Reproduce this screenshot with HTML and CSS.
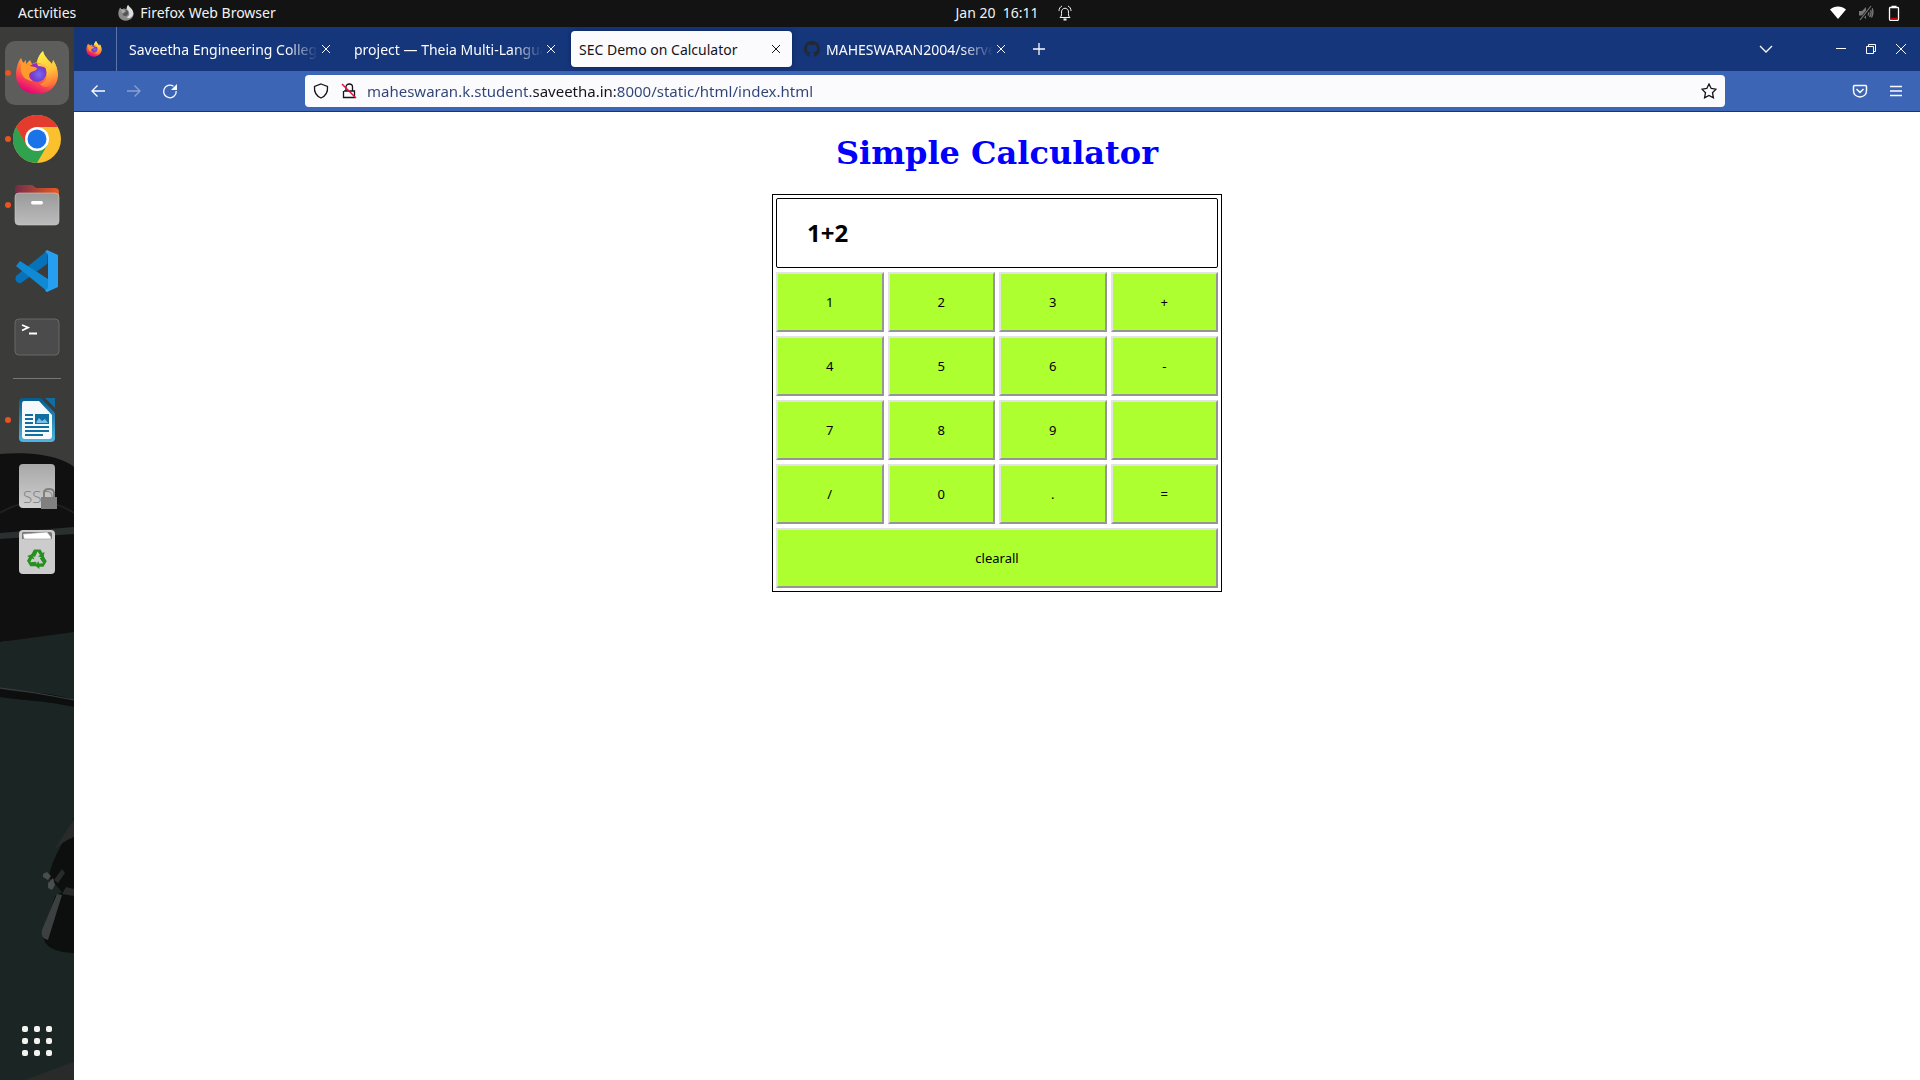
FILE: index.html
```html
<!DOCTYPE html>
<html lang="en">
<head>
<meta charset="utf-8">
<title>SEC Demo on Calculator</title>
<link rel="stylesheet" href="styles.css">
</head>
<body>
<header class="topbar">
  <div class="topbar-side">
    <button class="top-button">Activities</button>
    <button class="top-button app-menu">
      <svg class="icon" viewBox="0 0 42 44" aria-hidden="true"><path fill="#8b8b8b" d="M27 0C28 5 31 7 33 10C39 14 42 19 42 25C41 36 32 43 21 43C9 43 0 35 0 24C0 17 2 11 5 7L9 13C13 11 14 9 17 10L23 11C23 6 24 3 27 0Z"/><path fill="#dedede" d="M27 0C30 7 42 10 41 25C38 37 27 38 23 34C34 29 31 18 23 11C23 6 24 3 27 0Z"/><circle cx="19" cy="22" r="8" fill="#555"/><path fill="#aaa" d="M5 8C8 13 15 11 21 17C20 20 14 19 14 24C10 23 8 18 5 8Z"/></svg>
      Firefox Web Browser
    </button>
  </div>
  <button class="top-button clock">
    <span>Jan 20&nbsp; 16:11</span>
    <svg class="icon" viewBox="0 0 16 16" aria-hidden="true" fill="none" stroke="#f2f2f2"><path d="M3 12.500C5 11 4.500 9 4.500 7C4.500 2 11.500 2 11.500 7C11.500 9 11 11 13 12.500ZM2 6C2 3.500 3 2 5 1M14 6C14 3.500 13 2 11 1"/><path d="M6.500 14.500H9.500" stroke-width="2"/></svg>
  </button>
  <button class="top-button status" aria-label="System menu">
    <svg class="icon" viewBox="0 0 16 16"><path fill="#fff" d="M0 4.500C4.500 .5 11.500 .5 16 4.500L8 14Z"/></svg>
    <svg class="icon" viewBox="0 0 16 16" fill="none" stroke="#777"><path fill="#777" stroke="none" d="M1 6H4L8 2V14L4 10.500H1Z"/><path stroke-width="1.400" d="M10 5.500Q11.500 8 10 10.500M12 4Q14.500 8 11.500 12M14 3Q16 8 13.500 12.500"/><path stroke="#131313" stroke-width="3" d="M2 15L14 1"/><path stroke-width="1.200" d="M2 15L13 1"/></svg>
    <svg class="icon" viewBox="0 0 16 16" fill="none"><path stroke="#fff" stroke-width="1.300" d="M5 2.500H4Q3.500 2.500 3.500 3.500V14Q3.500 15.500 5 15.500H11Q12.500 15.500 12.500 14V3.500Q12.500 2.500 12 2.500H5M5.500 1.500H10.500"/><path stroke="#c00" stroke-width="1.500" d="M4.500 13.500H11.500"/></svg>
  </button>
</header>

<div class="desktop">
  <nav class="dock" aria-label="Dock">
    <svg class="wallpaper" viewBox="0 0 74 1053" preserveAspectRatio="none" aria-hidden="true">
      <path fill="#3b3b39" d="M0 0H74V1053H0Z"/>
      <path fill="#101010" d="M0 427C35 424 62 430 74 440V608L0 615Z"/>
      <path fill="none" stroke="#1e1f1f" stroke-width="2" d="M0 486Q38 463 74 486"/>
      <path fill="#2a2f2f" d="M0 506L74 500V507L0 512Z"/>
      <path fill="#1a2524" d="M0 615L74 605V1053H0Z"/>
      <path fill="#0d0e0e" d="M0 662C25 667 44 663 74 673V680C42 673 25 674 0 670Z"/>
      <path fill="none" stroke="#3d3e3e" d="M0 661Q34 665 74 673"/>
      <path fill="#0d0e0e" d="M74 790C66 814 52 830 49 850L62 865L55 869L43 908Q44 925 74 926Z"/>
      <path fill="#3d4040" d="M57 867L62 868L48 913Q40 911 42 903Z"/>
      <path fill="#4a4d4d" d="M43 847L47 845L51 849L48 853L43 850ZM48 856L53 851L55 858L52 863L48 861Z"/>
      <path fill="#292b2a" d="M24 1053L74 1035V1053ZM74 792L54 823Q63 814 74 810ZM66 860L74 862V869L62 867ZM62 842L65 846L58 856L54 853Z"/>
    </svg>
    <ul class="dock-list">
      <li><button class="dock-item focused running" aria-label="Firefox">
        <svg width="42" height="44" viewBox="0 0 42 44" aria-hidden="true">
          <defs>
            <linearGradient id="fire" x1=".8" y1="0" x2=".35" y2="1"><stop offset="0" stop-color="#ffe94a"/><stop offset=".35" stop-color="#ffad29"/><stop offset=".62" stop-color="#ff6740"/><stop offset="1" stop-color="#e30079"/></linearGradient>
            <linearGradient id="flame" x1=".4" y1="0" x2=".6" y2="1"><stop offset="0" stop-color="#fff24a"/><stop offset=".55" stop-color="#ffc33a"/><stop offset="1" stop-color="#ff6b3b"/></linearGradient>
            <radialGradient id="globe" cx=".6" cy=".6"><stop offset="0" stop-color="#7b68f2"/><stop offset=".7" stop-color="#7140d2"/><stop offset="1" stop-color="#9b2ab4"/></radialGradient>
          </defs>
          <g id="firefox">
            <path fill="url(#fire)" d="M27 0C28 5 31 7 33 10L36 13C37 12 37 10 37 9C40 14 42 18 42 25C41 36 32 43 21 43C9 43 0 35 0 24C0 17 2 11 5 7L7 12L10 9V13L14 9L16 13L21 11C22 6 24 3 27 0Z"/>
            <path fill="url(#flame)" d="M27 0C28 5 31 7 33 10L36 13L37 9C41 15 42 20 41 26C38 37 28 38 24 33C34 30 33 18 21 11C22 6 24 3 27 0Z"/>
            <circle cx="21" cy="21.500" r="9.500" fill="url(#globe)"/>
            <path fill="#ff9a2d" d="M5 8C7 13 8 12 12 14C15 16 18 15 21 17C21 20 16 20 14 22C12 25 14 28 17 30C10 30 5 25 5 18Z"/>
            <path fill="#ffc044" d="M21 12Q29 12 33 18Q26 15 22 15Z"/>
          </g>
        </svg></button></li>
      <li><button class="dock-item running" aria-label="Chrome">
        <svg width="48" height="48" viewBox="0 0 48 48" aria-hidden="true"><circle cx="24" cy="24" r="24" fill="#fbc02d"/><path fill="#e33b2e" d="M3.200 12A24 24 0 0 1 44.800 12H24L13.600 30Z"/><path fill="#30a14e" d="M3.200 12A24 24 0 0 0 24 48L34.400 30H13.600Z"/><path fill="#e33b2e" d="M3.200 12L13.600 30L24 12Z"/><circle cx="24" cy="24" r="12" fill="#fff"/><circle cx="24" cy="24" r="9.500" fill="#1a73e8"/></svg></button></li>
      <li><button class="dock-item running" aria-label="Files">
        <svg width="48" height="48" viewBox="0 0 48 48" aria-hidden="true"><defs><linearGradient id="folder"><stop stop-color="#742b4a"/><stop offset="1" stop-color="#ea5b20"/></linearGradient><linearGradient id="silver" x2="0" y2="1"><stop stop-color="#9a9a9a"/><stop offset="1" stop-color="#bcbcbc"/></linearGradient></defs><path fill="url(#folder)" d="M2 8Q2 4 6 4H19L23 7H42Q46 7 46 11V20H2Z"/><rect x="2" y="12" width="44" height="32" rx="4" fill="url(#silver)" stroke="#ccc" stroke-width=".6"/><rect x="18" y="20" width="12" height="3.500" rx="1.700" fill="#fff"/></svg></button></li>
      <li><button class="dock-item" aria-label="Visual Studio Code">
        <svg width="48" height="48" viewBox="0 0 48 48" aria-hidden="true"><path fill="#0872b9" d="M3 29L35 3L34 17L8 36Q6 37 3 34Q2 32 3 29Z"/><path fill="#118ad5" d="M3 19L7 14L35 32V45L3 19Z"/><path fill="#279ff0" d="M34 3L45 8V40L34 45Q33 45 32 43Q35 42 35 40V8Q34 5 32 5Z"/></svg></button></li>
      <li><button class="dock-item" aria-label="Terminal">
        <svg width="48" height="48" viewBox="0 0 48 48" aria-hidden="true" fill="none"><rect x="2" y="6" width="44" height="36" rx="4" fill="#4b4b4b" stroke="#696969"/><path stroke="#fff" stroke-width="1.800" d="M9 12L15 14.500L9 17.500M16 20.500H24"/></svg></button></li>
      <li class="dock-separator"></li>
      <li><button class="dock-item running" aria-label="LibreOffice Writer">
        <svg width="48" height="48" viewBox="0 0 48 48" aria-hidden="true"><defs><linearGradient id="writer" x2="0" y2="1"><stop stop-color="#075b8a"/><stop offset="1" stop-color="#4eb5e4"/></linearGradient></defs><path fill="url(#writer)" d="M10 2H28L42 17V42Q42 46 38 46H10Q6 46 6 42V6Q6 2 10 2Z"/><path fill="#f6f9fb" d="M11 5H26L39 19V40Q39 43 36 43H12Q9 43 9 40V8Q9 5 11 5Z"/><path fill="#126da1" d="M32 2H42V12Z"/><path stroke="#126da1" stroke-width="2" d="M12 19H20M12 23H20M12 27H20M12 31H36M12 35H36M12 39H30"/><path fill="#126da1" d="M22 18H36V28H22Z"/><path fill="#75c2e8" d="M23.500 26L26 22L29 25L32 23L35 27H23.500Z"/></svg></button></li>
      <li><button class="dock-item" aria-label="SSD drive">
        <svg width="48" height="48" viewBox="0 0 48 48" aria-hidden="true"><defs><linearGradient id="disk" x2="0" y2="1"><stop stop-color="#a8a8a8"/><stop offset="1" stop-color="#cfcfcf"/></linearGradient></defs><rect x="6" y="2" width="36" height="44" rx="4" fill="url(#disk)"/><text class="disk-label" x="10" y="41">SSD</text><path fill="none" stroke="#808080" stroke-width="2" d="M31 36V31Q31 27 36 27Q41 27 41 31V36"/><path fill="#808080" d="M28 35H44V47H28Z"/></svg></button></li>
      <li><button class="dock-item" aria-label="Trash">
        <svg width="48" height="48" viewBox="0 0 48 48" aria-hidden="true"><rect x="6" y="2" width="36" height="44" rx="4" fill="#ccc"/><path fill="#777" d="M9 5Q9 4 11 4H37Q39 4 39 6V11H9Z"/><path fill="#fff" stroke="#999" stroke-width=".6" d="M10 6L34 4L38 9V11H11Z"/><g fill="#26901f"><path id="arrow" d="M18 27L21 21.500H27.500L29.500 25L31.500 24L30.500 29.500L25 28.500L27 27L24.500 23.500L22 29Z"/><use href="#arrow" transform="rotate(120 24 31)"/><use href="#arrow" transform="rotate(240 24 31)"/></g></svg></button></li>
    </ul>
    <button class="dock-item" aria-label="Show Applications">
      <svg width="30" height="30" viewBox="0 0 30 30" fill="#f3f3ef" aria-hidden="true"><g id="dots"><rect width="6" height="6" rx="2"/><rect x="12" width="6" height="6" rx="2"/><rect x="24" width="6" height="6" rx="2"/></g><use href="#dots" y="12"/><use href="#dots" y="24"/></svg>
    </button>
  </nav>

  <div class="browser">
    <div class="tabbar">
      <button class="pinned-tab" aria-label="Firefox View"><svg class="icon" viewBox="0 0 42 44"><use href="#firefox"/></svg></button>
      <div class="tabs">
        <div class="tab"><button class="tab-title">Saveetha Engineering College</button><button class="tab-close" aria-label="Close tab"><svg class="icon" viewBox="0 0 16 16"><path d="M4 4L12 12M12 4L4 12"/></svg></button></div>
        <div class="tab"><button class="tab-title">project — Theia Multi-Language</button><button class="tab-close" aria-label="Close tab"><svg class="icon" viewBox="0 0 16 16"><path d="M4 4L12 12M12 4L4 12"/></svg></button></div>
        <div class="tab active"><button class="tab-title">SEC Demo on Calculator</button><button class="tab-close" aria-label="Close tab"><svg class="icon" viewBox="0 0 16 16"><path d="M4 4L12 12M12 4L4 12"/></svg></button></div>
        <div class="tab"><svg class="icon favicon" viewBox="0 0 16 16" aria-hidden="true"><path d="M8 0C3.580 0 0 3.580 0 8c0 3.540 2.290 6.530 5.470 7.590.4.070.55-.17.55-.38 0-.19-.01-.82-.01-1.490-2.010.37-2.530-.49-2.690-.94-.09-.23-.48-.94-.82-1.130-.28-.15-.68-.52-.01-.53.63-.01 1.080.58 1.230.82.72 1.210 1.870.87 2.330.66.07-.52.28-.87.51-1.070-1.780-.2-3.640-.89-3.640-3.950 0-.87.31-1.590.82-2.150-.08-.2-.36-1.020.08-2.120 0 0 .67-.21 2.200.82.64-.18 1.320-.27 2-.27s1.360.09 2 .27c1.530-1.040 2.200-.82 2.200-.82.44 1.100.16 1.920.08 2.120.51.56.82 1.270.82 2.150 0 3.070-1.870 3.750-3.650 3.950.29.25.54.73.54 1.480 0 1.070-.01 1.930-.01 2.200 0 .21.15.46.55.38A8.010 8.010 0 0 0 16 8c0-4.420-3.580-8-8-8Z"/></svg><button class="tab-title">MAHESWARAN2004/serverside</button><button class="tab-close" aria-label="Close tab"><svg class="icon" viewBox="0 0 16 16"><path d="M4 4L12 12M12 4L4 12"/></svg></button></div>
        <button class="tool" aria-label="New tab"><svg class="icon" viewBox="0 0 16 16"><path d="M2 8H14M8 2V14"/></svg></button>
      </div>
      <button class="tool list-tabs" aria-label="List all tabs"><svg class="icon" viewBox="0 0 16 16"><path d="M2 5L8 11L14 5"/></svg></button>
      <div class="window-controls">
        <button aria-label="Minimize"><svg class="icon" viewBox="0 0 16 16"><path d="M3 7.500H13"/></svg></button>
        <button aria-label="Restore"><svg class="icon" viewBox="0 0 16 16"><path d="M3.500 5.500H10.500V12.500H3.500ZM5.500 5V3.500H12.500V10.500H11"/></svg></button>
        <button aria-label="Close"><svg class="icon" viewBox="0 0 16 16"><path d="M3 3L13 13M13 3L3 13"/></svg></button>
      </div>
    </div>

    <div class="toolbar">
      <button class="tool" aria-label="Back"><svg class="icon" viewBox="0 0 16 16"><path d="M15 8H2M7.500 2.500L2 8L7.500 13.500"/></svg></button>
      <button class="tool" aria-label="Forward" disabled><svg class="icon" viewBox="0 0 16 16"><path d="M1 8H14M8.500 2.500L14 8L8.500 13.500"/></svg></button>
      <button class="tool" aria-label="Reload"><svg class="icon" viewBox="0 0 16 16"><path d="M14.200 8A6.300 6.300 0 1 1 11.500 3.300"/><path fill="#fbfbfe" stroke="none" d="M15 1V7H9Z"/></svg></button>
      <div class="urlbar">
        <button aria-label="Tracking protection"><svg class="icon" viewBox="0 0 16 16"><path d="M8 1L14.500 3.500C15 9 12.500 13 8 15C3.500 13 1 9 1.500 3.500Z"/></svg></button>
        <button aria-label="Connection not secure"><svg class="icon" viewBox="0 0 16 16"><path d="M3 8H13.500V14.500H2.500V8M5 8V4C5 0 11.500 0 11.500 4V8"/><path class="strike" d="M1 1L15 15"/></svg></button>
        <input class="address" type="text" aria-label="Address" value="maheswaran.k.student.saveetha.in:8000/static/html/index.html">
        <button aria-label="Bookmark this page"><svg class="icon" viewBox="0 0 16 16"><path d="M8 1L10.200 5.500L15 6.200L11.500 9.700L12.400 14.800L8 12.400L3.600 14.800L4.500 9.700L1 6.200L5.800 5.500Z"/></svg></button>
      </div>
      <button class="tool" aria-label="Save to Pocket"><svg class="icon" viewBox="0 0 16 16"><path stroke-width="1.500" d="M2.500 2.500H13.500Q14.500 2.500 14.500 3.500V7.500C14.500 16 1.500 16 1.500 7.500V3.500Q1.500 2.500 2.500 2.500ZM4.500 6L8 9.500L11.500 6"/></svg></button>
      <button class="tool" aria-label="Menu"><svg class="icon" viewBox="0 0 16 16"><path d="M2 3.500H14M2 8H14M2 12.500H14"/></svg></button>
    </div>

    <main class="page">
      <h1>Simple Calculator</h1>
      <form class="calculator">
        <input class="display" type="text" aria-label="Result" value="1+2">
        <button type="button">1</button><button type="button">2</button><button type="button">3</button><button type="button">+</button>
        <button type="button">4</button><button type="button">5</button><button type="button">6</button><button type="button">-</button>
        <button type="button">7</button><button type="button">8</button><button type="button">9</button><button type="button" aria-label="Multiply"></button>
        <button type="button">/</button><button type="button">0</button><button type="button">.</button><button type="button">=</button>
        <button type="button" class="wide">clearall</button>
      </form>
    </main>
  </div>
</div>
</body>
</html>
```
FILE: styles.css
```css
* { box-sizing: border-box; }

body {
  margin: 0;
  min-height: 100vh;
  display: flex;
  flex-direction: column;
  font: 14px/20px "Noto Sans", sans-serif;
}

button {
  margin: 0;
  padding: 0;
  border: 0;
  background: none;
  color: inherit;
  font: inherit;
}

svg { display: block; flex: none; }
.icon { width: 16px; height: 16px; }

/* System bar */
.topbar {
  display: grid;
  grid-template-columns: 1fr auto 1fr;
  align-items: center;
  height: 27px;
  padding: 0 18px 2px;
  background: #131313;
  color: #f2f2f2;
}
.topbar-side { display: flex; gap: 42px; }
.top-button { display: flex; align-items: center; }
.app-menu { gap: 6px; }
.clock { gap: 18px; padding-left: 108px; }
.status { gap: 12px; justify-self: end; }

.desktop { flex: 1; display: flex; }

/* Dock */
.dock {
  position: relative;
  flex: none;
  width: 74px;
  padding: 14px 5px 7px;
  display: flex;
  flex-direction: column;
  justify-content: space-between;
}
.wallpaper { position: absolute; inset: 0; width: 100%; height: 100%; }
.dock-list {
  position: relative;
  margin: 0;
  padding: 0;
  list-style: none;
  display: flex;
  flex-direction: column;
  gap: 2px;
}
.dock-item {
  position: relative;
  width: 64px;
  height: 64px;
  display: flex;
  align-items: center;
  justify-content: center;
  border-radius: 10px;
}
.focused { background: #5d5d5b; }
.running::before {
  content: "";
  position: absolute;
  left: 0;
  top: 29px;
  width: 6px;
  height: 6px;
  border-radius: 50%;
  background: #e95420;
}
.dock-separator { height: 1px; margin: 7px 8px; background: #777; }
.disk-label { font: 300 17px "Open Sans", sans-serif; fill: #808080; }

/* Browser chrome */
.browser { flex: 1; min-width: 0; display: flex; flex-direction: column; background: #fff; }
.tabbar { display: flex; align-items: center; height: 44px; background: #15367b; color: #fbfbfe; }
.browser .icon { fill: none; stroke: currentColor; }
.pinned-tab {
  width: 43px;
  height: 44px;
  padding-left: 12px;
  border-right: 1px solid #5d73a5;
}
.pinned-tab .icon { stroke: none; }
.tabs { flex: 1; display: flex; align-items: center; gap: 4px; padding-left: 4px; }
.tab {
  flex: 0 1 221px;
  min-width: 0;
  height: 36px;
  padding: 0 8px;
  display: flex;
  align-items: center;
  border-radius: 4px;
}
.tab.active { background: #fbfbfe; color: #15141a; box-shadow: 0 0 4px #0c2456; }
.tab-title {
  flex: 1;
  min-width: 0;
  padding-top: 2px;
  overflow: hidden;
  white-space: nowrap;
  text-align: left;
  mask-image: linear-gradient(to left, transparent, #000 32px);
}
.tab.active .tab-title { mask-image: none; }
.browser .favicon { margin-right: 6px; fill: #24292f; stroke: none; }
.tool { flex: none; width: 36px; height: 36px; display: flex; align-items: center; justify-content: center; }
.tool .icon { stroke-width: 1.3; }
.tool:disabled { color: #fbfbfe; opacity: .4; }
.list-tabs { margin-right: 49px; }
.window-controls { display: flex; gap: 14px; padding-right: 11px; }

.toolbar {
  display: flex;
  align-items: center;
  height: 41px;
  padding: 0 6px;
  background: #3c65b5;
  border-bottom: 1px solid #15367b;
  color: #fbfbfe;
}
.urlbar {
  flex: 1;
  min-width: 0;
  height: 32px;
  margin: 0 117px;
  padding: 0 8px;
  display: flex;
  align-items: center;
  gap: 12px;
  border-radius: 4px;
  background: #fbfbfe;
  color: #15141a;
}
.urlbar .icon { stroke-width: 1.3; }
.urlbar .strike { stroke: #e6103c; stroke-width: 1.5; }
.address {
  flex: 1;
  min-width: 0;
  height: 32px;
  margin-left: -2px;
  padding: 0;
  border: 0;
  outline: 0;
  font: inherit;
  font-size: 15px;
  color: transparent;
  caret-color: #15141a;
  background: linear-gradient(to right, #2f4475 166px, #15141a 166px 248px, #2f4475 248px);
  background-clip: text;
}

/* Calculator page */
.page { flex: 1; display: flex; flex-direction: column; align-items: center; padding: 22px 8px; }
h1 {
  margin: 0 0 22px;
  font: bold 32px/38px "DejaVu Serif", serif;
  color: #00f;
}
.calculator {
  width: 450px;
  max-width: 100%;
  padding: 3px;
  display: grid;
  grid-template-columns: repeat(4, 1fr);
  gap: 4px;
  border: 1px solid #000;
}
.display {
  grid-column: 1 / -1;
  min-width: 0;
  height: 70px;
  padding: 0 30px 2px;
  border: 1px solid #000;
  border-radius: 2px;
  font: bold 24px "Noto Sans", sans-serif;
}
.calculator button {
  height: 60px;
  border: 2px solid;
  border-color: #e3e3e3 #959595 #959595 #e3e3e3;
  background: #adff2f;
  color: #000;
  font-size: 13px;
}
.calculator .wide { grid-column: 1 / -1; }
```
